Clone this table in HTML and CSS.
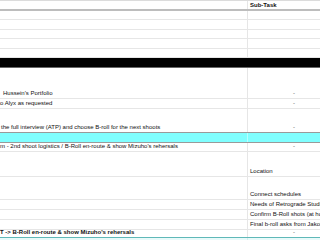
FILE: index.html
```html
<!DOCTYPE html>
<html>
<head>
<meta charset="utf-8">
<link rel="stylesheet" href="styles.css">
</head>
<body>
<div class="sheet">
  <div class="row head h11"><div class="cell main"></div><div class="cell sub bold">Sub-Task</div></div>
  <div class="row h9"><div class="cell main"></div><div class="cell sub"></div></div>
  <div class="row h10"><div class="cell main"></div><div class="cell sub"></div></div>
  <div class="row h9"><div class="cell main"></div><div class="cell sub"></div></div>
  <div class="row h10"><div class="cell main"></div><div class="cell sub"></div></div>
  <div class="row h9"><div class="cell main"></div><div class="cell sub"></div></div>
  <div class="row black h10"><div class="cell main"></div><div class="cell sub"></div></div>
  <div class="row h31"><div class="cell main ind3">Hussein's Portfolio</div><div class="cell sub"><span class="dash">-</span></div></div>
  <div class="row h10"><div class="cell main">o Alyx as requested</div><div class="cell sub"><span class="dash">-</span></div></div>
  <div class="row h24 edge"><div class="cell main ind1">the full interview (ATP) and choose B-roll for the next shoots</div><div class="cell sub"><span class="dash">-</span></div></div>
  <div class="row cyan h10 edge"><div class="cell main"></div><div class="cell sub"></div></div>
  <div class="row h9"><div class="cell main">m - 2nd shoot logistics / B-Roll en-route &amp; show Mizuho's rehersals</div><div class="cell sub"><span class="dash">-</span></div></div>
  <div class="row h25"><div class="cell main"></div><div class="cell sub">Location</div></div>
  <div class="row h23"><div class="cell main"></div><div class="cell sub">Connect schedules</div></div>
  <div class="row h10"><div class="cell main"></div><div class="cell sub">Needs of Retrograde Studio</div></div>
  <div class="row h10"><div class="cell main"></div><div class="cell sub">Confirm B-Roll shots (at home)</div></div>
  <div class="row h10"><div class="cell main"></div><div class="cell sub">Final b-roll asks from Jakob</div></div>
  <div class="row h8 last"><div class="cell main bold">T -&gt; B-Roll en-route &amp; show Mizuho's rehersals</div><div class="cell sub"><span class="dash">-</span></div></div>
  <div class="row tail"><div class="cell main"></div><div class="cell sub"></div></div>
</div>
</body>
</html>
```

FILE: styles.css
```css
html, body {
  margin: 0;
  padding: 0;
  background: #fff;
  overflow: hidden;
}
.sheet {
  width: 320px;
  height: 240px;
  overflow: hidden;
  font-family: "Liberation Sans", Arial, sans-serif;
  font-size: 6px;
  color: #111;
}
.row {
  display: grid;
  grid-template-columns: 248px 72px;
  box-sizing: border-box;
  border-bottom: 1px solid #e6e6e6;
  overflow: hidden;
}
.cell {
  display: flex;
  align-items: flex-end;
  line-height: 7px;
  padding-bottom: 1px;
  white-space: nowrap;
  overflow: hidden;
  min-width: 0;
}
.main {
  border-right: 1px solid #e6e6e6;
}
.sub {
  padding-left: 2px;
}
.ind3 { padding-left: 3px; }
.ind1 { padding-left: 1px; }
.bold { font-weight: bold; }
.dash {
  padding-left: 43px;
  color: #555;
}
.head {
  border-top: 1px solid #dcdcdc;
  border-bottom: 2px solid #bdbdbd;
}
.head .cell { align-items: center; padding-bottom: 0; }
.h8 { height: 8px; }
.h9 { height: 9px; }
.h10 { height: 10px; }
.h11 { height: 11px; }
.h23 { height: 23px; }
.h24 { height: 24px; }
.h25 { height: 25px; }
.h31 { height: 31px; }
.black {
  background: #000;
  border-bottom-color: #666;
}
.black .main { border-right-color: #000; }
.edge { border-bottom-color: #9a9a9a; }
.cyan { background: #80ffff; }
.cyan .main { border-right-color: #b8ffff; }
.last { border-bottom: 1px solid #5fb8b8; }
.tail {
  height: 4px;
  background: #e8fafa;
  border-bottom: none;
}
.tail .main { border-right-color: #d4eded; }
```
